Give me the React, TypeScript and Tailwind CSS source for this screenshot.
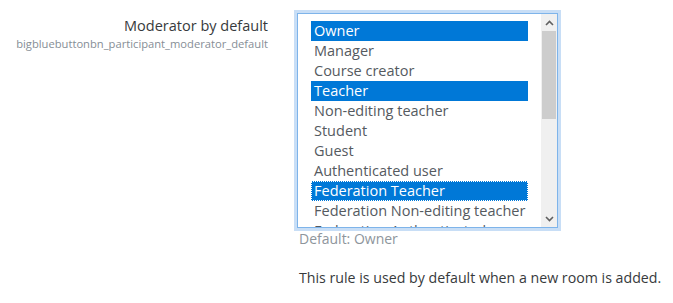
const roles = [
  { name: "Owner", selected: true },
  { name: "Manager" },
  { name: "Course creator" },
  { name: "Teacher", selected: true },
  { name: "Non-editing teacher" },
  { name: "Student" },
  { name: "Guest" },
  { name: "Authenticated user" },
  { name: "Federation Teacher", selected: true, focused: true },
  { name: "Federation Non-editing teacher" },
  { name: "Federation Authenticated user" }
];

const font = { fontFamily: '"Open Sans", "Noto Sans", sans-serif' };

export default function App() {
  return (
    <div className="h-[303px] w-[673px] bg-white pt-[13px] text-[#373a3c]" style={font}>
      <div className="flex">
        <div className="w-[268px] shrink-0 text-right">
          <div className="pt-[3px] text-[14.5px] leading-[20px] text-[#373a3c]">Moderator by default</div>
          <div className="mt-[1px] text-[11.2px] leading-[14px] text-[#868e96]">
            bigbluebuttonbn_participant_moderator_default
          </div>
        </div>

        <div className="ml-[29px]">
          <div className="flex h-[215px] w-[261px] border border-[#7eb4ea] shadow-[0_0_0_3px_#c8def6]">
            <div className="h-full w-[243px] overflow-hidden pl-[13px] pt-[7px]">
              {roles.map((r) => (
                <div
                  key={r.name}
                  className={`h-5 w-[217px] whitespace-nowrap pl-[3px] text-[14.5px] leading-5 ${
                    r.selected ? "bg-[#0078d7] text-white" : "text-[#555a5f]"
                  } ${r.focused ? "outline-1 -outline-offset-1 outline-dotted outline-white" : ""}`}
                >
                  {r.name}
                </div>
              ))}
            </div>
            <div className="flex h-full w-4 flex-col bg-[#f0f0f0]">
              <div className="flex h-[17px] items-center justify-center">
                <svg width="9" height="6" viewBox="0 0 9 6">
                  <path d="M1 5 L4.5 1.5 L8 5" fill="none" stroke="#606060" strokeWidth="1.6" />
                </svg>
              </div>
              <div className="mx-[1px] h-[88px] bg-[#cdcdcd]" />
              <div className="flex-1" />
              <div className="flex h-[17px] items-center justify-center">
                <svg width="9" height="6" viewBox="0 0 9 6">
                  <path d="M1 1 L4.5 4.5 L8 1" fill="none" stroke="#606060" strokeWidth="1.6" />
                </svg>
              </div>
            </div>
          </div>
          <div className="mt-[1px] pl-[2px] text-[14px] leading-5 text-[#8e959c]">Default: Owner</div>
          <div className="mt-[19px] pl-[2px] text-[14.2px] leading-5 text-[#373a3c]">
            This rule is used by default when a new room is added.
          </div>
        </div>
      </div>
    </div>
  );
}
